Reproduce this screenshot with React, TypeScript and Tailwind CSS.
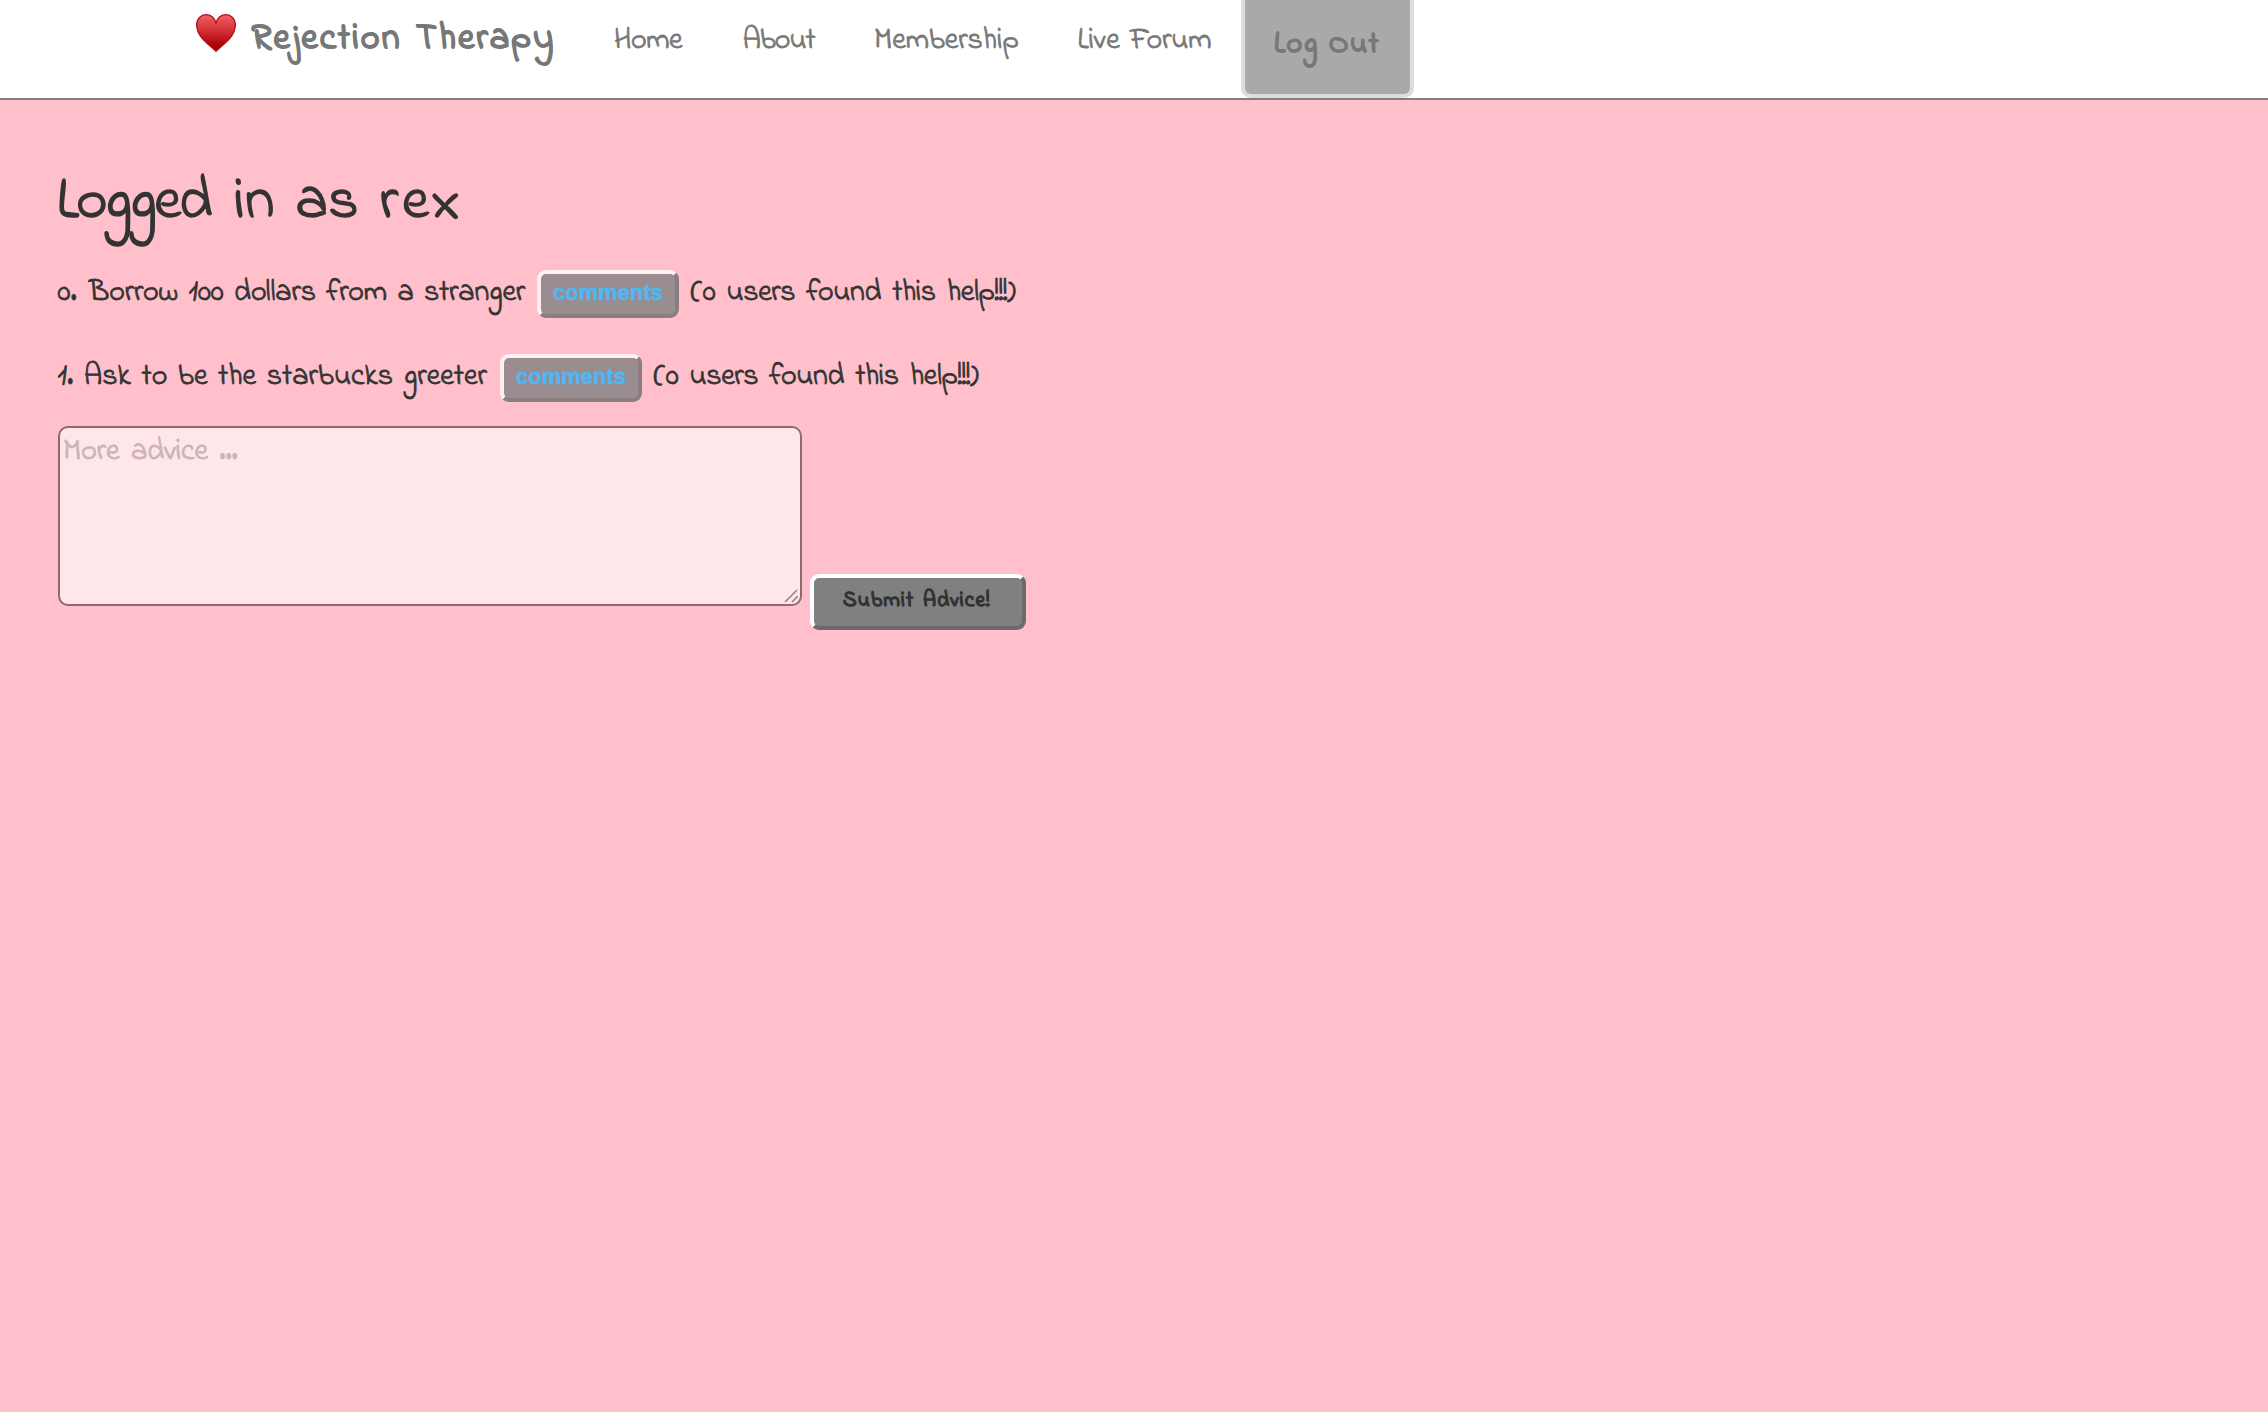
const navLinks = [
  { label: "Home", box: "w-[128.5px]", text: "tracking-[-0.4px]" },
  { label: "About", box: "w-[131.5px]", text: "tracking-[-1px]" },
  { label: "Membership", box: "w-[203.5px]", text: "tracking-[0px]" },
  { label: "Live Forum", box: "w-[163.5px]", text: "tracking-[-0.1px]" },
];

const tips = [
  { number: "0.", text: "Borrow 100 dollars from a stranger", box: "w-[479.5px]", spacing: "ml-[2px] tracking-[-0.1px]" },
  { number: "1.", text: "Ask to be the starbucks greeter", box: "w-[442.5px]", spacing: "tracking-[0.1px]" },
];

function Heart() {
  return (
    <svg className="mt-[13px] h-[40px] w-[42px] shrink-0" viewBox="0 0 42 40">
      <defs>
        <linearGradient id="heart" x1="0" y1="0" x2="0" y2="1">
          <stop offset="0" stopColor="#ee6065" />
          <stop offset="0.45" stopColor="#d22e33" />
          <stop offset="0.85" stopColor="#a90007" />
          <stop offset="1" stopColor="#a00006" />
        </linearGradient>
      </defs>
      <path
        d="M21 38.3C18 34 1.7 25.5 1.7 12C1.7 5.5 6 1.7 11 1.7C16 1.7 19.5 5 21 10C22.5 5 26 1.7 31 1.7C36 1.7 40.3 5.5 40.3 12C40.3 25.5 24 34 21 38.3Z"
        fill="url(#heart)"
        stroke="#b50d14"
        strokeWidth="1.3"
      />
    </svg>
  );
}

export default function App() {
  return (
    <div className="flex h-[1412px] w-[2268px] flex-col overflow-hidden bg-[#ffc0cb] font-['Indie_Flower',cursive] text-[30px] whitespace-nowrap text-[#333333] [-webkit-text-stroke:0.8px] [word-spacing:3px]">
      <header className="flex h-[100px] shrink-0 items-start border-b-2 border-[#808080] bg-white pl-[195px] leading-[41px] text-[#777777]">
        <Heart />
        <div className="ml-[14.5px] w-[362.5px] shrink-0 pt-[19px] text-[36px] font-bold tracking-[2.2px] [-webkit-text-stroke:0.8px]">
          Rejection Therapy
        </div>
        {navLinks.map((link) => (
          <a key={link.label} className={`${link.box} ${link.text} shrink-0 pt-[21px]`}>
            {link.label}
          </a>
        ))}
        <button className="flex h-[98px] w-[173px] shrink-0 items-start rounded-b-[10px] border-4 border-t-0 border-[#dddddd] bg-[#a9a9a9] pt-[25px] pl-[29px] leading-[41px] font-bold tracking-[1.5px] [-webkit-text-stroke:0.7px] [word-spacing:1px]">
          Log Out
        </button>
      </header>
      <main className="flex flex-col items-start pl-[57.5px]">
        <h1 className="-ml-px mt-[59px] h-[88px] text-[60px] leading-[88px] [-webkit-text-stroke:1.4px] [word-spacing:6px]">
          <span className="tracking-[-2.4px]">Logged</span>
          <span className="ml-[3px]"> in as </span>
          <span className="tracking-[4px]">rex</span>
        </h1>
        <div className="mt-[23px] flex h-[132px] flex-col gap-[36px]">
          {tips.map((tip) => (
            <div key={tip.text} className="flex h-[48px] items-start leading-[46px]">
              <span className={`${tip.box} shrink-0`}>
                {tip.number} <span className={tip.spacing}>{tip.text}</span>
              </span>
              <button className="flex h-[48px] w-[142px] shrink-0 items-start justify-center rounded-[9px] border-4 border-t-[#fff0f3] border-r-[#8b7e80] border-b-[#8b7e80] border-l-[#fff0f3] bg-[#9a8d8f] font-['Liberation_Sans',Arial,sans-serif] text-[22px] leading-[37px] font-bold text-[#4db8f5] [-webkit-text-stroke:0.5px] [word-spacing:0px]">
                comments
              </button>
              <span className="ml-[11.5px] tracking-[-0.35px] [word-spacing:4px]">(0 users found this help!!!)</span>
            </div>
          ))}
        </div>
        <div className="mt-[24px] flex items-start">
          <div className="relative h-[180px] w-[744px]">
            <textarea
              placeholder="More advice ..."
              className="block h-[180px] w-[744px] resize-none rounded-[10px] border-2 border-[#8a6b70] bg-[#ffe6ea] px-[3.5px] py-[4px] leading-[41px] [word-spacing:4px] placeholder:text-[#ccb3b7] placeholder:opacity-100"
            />
            <svg className="absolute right-[4px] bottom-[3px] h-[14px] w-[14px]" viewBox="0 0 14 14" stroke="#9b8387" strokeWidth="1.6">
              <path d="M1 13L13 1M8 13L14 7" />
            </svg>
          </div>
          <button className="mt-[148px] ml-[8px] flex h-[56px] w-[216px] items-start rounded-[9px] border-4 border-t-white border-r-[#6b6b6b] border-b-[#6b6b6b] border-l-white bg-[#808080] pt-[5px] pl-[29.5px] text-[21px] leading-[36px] font-bold tracking-[1.3px] [-webkit-text-stroke:0.7px] [word-spacing:2px]">
            Submit Advice!
          </button>
        </div>
      </main>
    </div>
  );
}
